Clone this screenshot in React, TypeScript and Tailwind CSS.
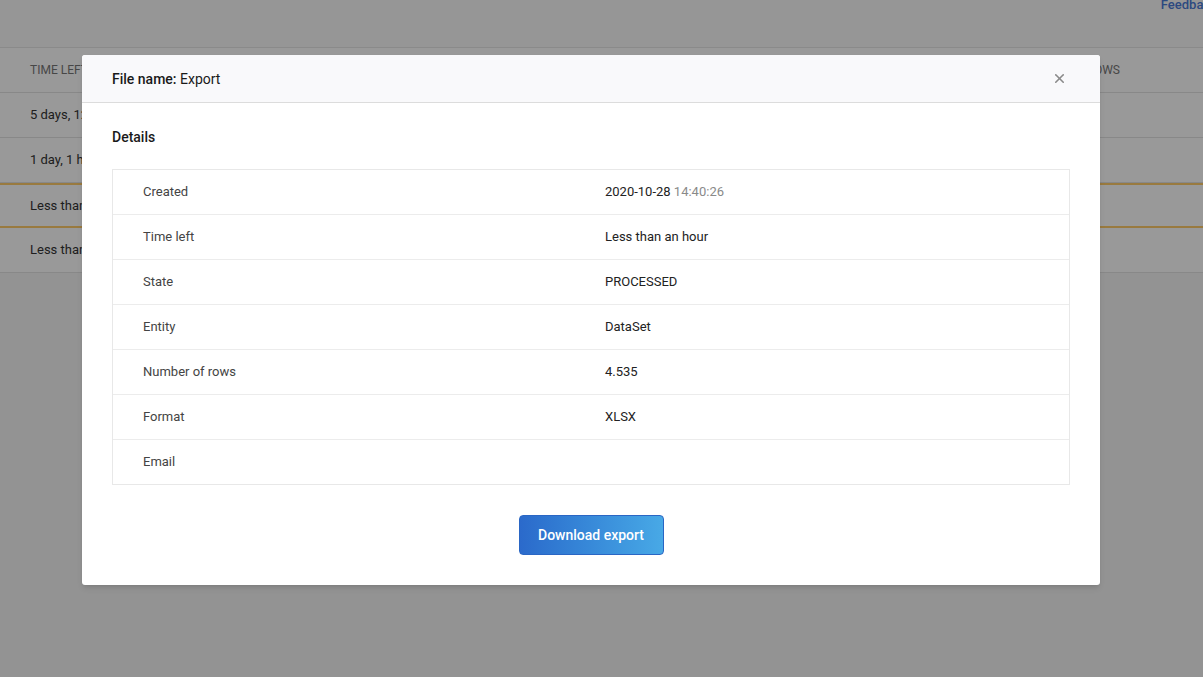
import { X } from 'lucide-react';

const rows = [
  { left: '5 days, 12 hours', highlight: false },
  { left: '1 day, 1 hour', highlight: false },
  { left: 'Less than an hour', highlight: true },
  { left: 'Less than an hour', highlight: false },
];

const details: { label: string; value: React.ReactNode }[] = [
  {
    label: 'Created',
    value: (
      <>
        2020-10-28 <span className="text-[#8a8a8a]">14:40:26</span>
      </>
    ),
  },
  { label: 'Time left', value: 'Less than an hour' },
  { label: 'State', value: 'PROCESSED' },
  { label: 'Entity', value: 'DataSet' },
  { label: 'Number of rows', value: '4.535' },
  { label: 'Format', value: 'XLSX' },
  { label: 'Email', value: '' },
];

export default function App() {
  return (
    <div className="relative h-[677px] w-[1203px] overflow-hidden bg-[#f5f5f5] font-['Roboto',sans-serif]">
      {/* page behind the dialog */}
      <div className="flex h-[48px] items-start justify-end border-b border-[#e6e6e6] bg-[#fafafa]">
        <span className="mr-[-14px] text-[13px] leading-[10px] font-medium text-[#4a7bd6]">Feedback</span>
      </div>
      <div className="bg-white">
        <div className="flex h-[45px] items-center justify-between border-b border-[#e3e3e3] pr-[83px] pl-[30px] text-[12px] text-[#777] uppercase">
          <span>Time left</span>
          <span>Number of rows</span>
        </div>
        {rows.map((r, i) => (
          <div
            key={i}
            className={
              r.highlight
                ? 'flex h-[45px] items-center border-y-2 border-[#ffcc6a] px-[30px] text-[13px] text-[#333]'
                : 'flex h-[45px] items-center border-b border-[#e3e3e3] px-[30px] text-[13px] text-[#333]'
            }
          >
            {r.left}
          </div>
        ))}
      </div>

      {/* overlay */}
      <div className="absolute inset-0 bg-black/40 pt-[55px]">
        <div className="ml-[82px] w-[1018px] overflow-hidden rounded-[3px] bg-white shadow-md">
          <div className="flex h-[48px] items-center justify-between border-b border-[#dcdcdc] bg-[#f9f9fb] pr-[33px] pl-[30px]">
            <div className="pt-[2px] text-[14px] text-[#1a1a1a]">
              <span className="font-medium">File name:</span> Export
            </div>
            <X className="h-[15px] w-[15px] text-[#8a8a8a]" strokeWidth={2.5} />
          </div>
          <div className="px-[30px] pt-[24px] pb-[30px]">
            <div className="text-[14px] font-medium text-[#1a1a1a]">Details</div>
            <div className="mt-[21px] border border-[#e8e8e8]">
              {details.map((d, i) => (
                <div
                  key={d.label}
                  className={
                    i === details.length - 1
                      ? 'grid h-[44px] grid-cols-[492px_1fr] items-center text-[13px] text-[#444]'
                      : 'grid h-[45px] grid-cols-[492px_1fr] items-center border-b border-[#ececec] text-[13px] text-[#444]'
                  }
                >
                  <span className="pl-[30px]">{d.label}</span>
                  <span className="text-[#222]">{d.value}</span>
                </div>
              ))}
            </div>
            <div className="mt-[30px] flex justify-center">
              <button className="h-[40px] w-[145px] rounded-[4px] border border-[#2a66c4] bg-gradient-to-r from-[#2b6acb] to-[#48a9e6] text-[14px] font-medium text-white">
                Download export
              </button>
            </div>
          </div>
        </div>
      </div>
    </div>
  );
}
